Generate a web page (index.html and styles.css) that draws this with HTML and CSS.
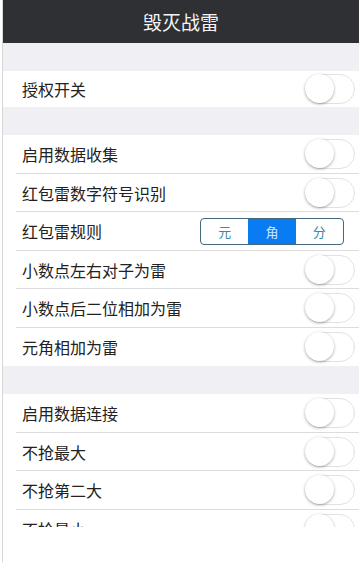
FILE: index.html
```html
<!DOCTYPE html>
<html lang="zh">

<head>
    <meta charset="UTF-8">
    <meta name="viewport" content="width=device-width, initial-scale=1.0">
    <title>毁灭战雷</title>
    <link rel="stylesheet" href="styles.css">
</head>

<body>
    <div class="page">
        <div class="navbar">
            <h2>毁灭战雷</h2>
        </div>
        <div id="content">
            <div class="gap"></div>
            <div class="group">
                <div class="row first"><span>授权开关</span><span class="switch"></span></div>
            </div>
            <div class="gap"></div>
            <div class="group">
                <div class="row"><span>启用数据收集</span><span class="switch"></span></div>
                <div class="row"><span>红包雷数字符号识别</span><span class="switch"></span></div>
                <div class="row">
                    <span>红包雷规则</span>
                    <div class="segment">
                        <button class="seg-btn">元</button>
                        <button class="seg-btn active">角</button>
                        <button class="seg-btn">分</button>
                    </div>
                </div>
                <div class="row"><span>小数点左右对子为雷</span><span class="switch"></span></div>
                <div class="row"><span>小数点后二位相加为雷</span><span class="switch"></span></div>
                <div class="row last"><span>元角相加为雷</span><span class="switch"></span></div>
            </div>
            <div class="gap"></div>
            <div class="group">
                <div class="row"><span>启用数据连接</span><span class="switch"></span></div>
                <div class="row"><span>不抢最大</span><span class="switch"></span></div>
                <div class="row"><span>不抢第二大</span><span class="switch"></span></div>
                <div class="row"><span>不抢最小</span><span class="switch"></span></div>
            </div>
        </div>
    </div>
</body>

</html>
```

FILE: styles.css
```css
html, body {
    margin: 0;
    height: 100%;
    background-color: #ffffff;
}

body {
    font-family: "Noto Sans CJK SC", "Noto Sans", sans-serif;
    color: #222222;
}

.page {
    margin-left: 2px;
    border-left: 1px solid #d6d6d6;
    height: 100%;
}

.navbar {
    height: 43px;
    background-color: #2f3034;
    display: flex;
    align-items: center;
    justify-content: center;
}

.navbar h2 {
    margin: 0;
    font-size: 19px;
    font-weight: normal;
    color: #f4f4f4;
}

#content {
    height: 484px;
    overflow: hidden;
    background-color: #efeff4;
}

.gap {
    height: 28px;
}

.group {
    background-color: #ffffff;
}

.row {
    position: relative;
    height: 38.5px;
    display: flex;
    align-items: center;
    justify-content: space-between;
    padding: 0 4px 0 19px;
    font-size: 16px;
    box-sizing: border-box;
}

.row.first {
    height: 36px;
}

.row::after {
    content: "";
    position: absolute;
    left: 13px;
    right: 0;
    bottom: 0;
    height: 1px;
    background-color: #dcdcdc;
}

.row.first::after,
.row.last::after {
    display: none;
}

.switch {
    position: relative;
    width: 50px;
    height: 30px;
    border-radius: 15px;
    border: 1.5px solid #e2e2e2;
    box-sizing: border-box;
    background-color: #ffffff;
}

.switch::before {
    content: "";
    position: absolute;
    left: -1px;
    top: -1px;
    width: 29px;
    height: 29px;
    border-radius: 50%;
    background-color: #ffffff;
    box-shadow: 0 1px 3px rgba(0, 0, 0, 0.35);
}

.segment {
    display: flex;
    width: 144px;
    height: 27px;
    border: 1px solid #45697a;
    border-radius: 4px;
    overflow: hidden;
    margin-right: 11px;
    box-sizing: border-box;
}

.seg-btn {
    flex: 1;
    border: none;
    background-color: transparent;
    color: #3b8aa3;
    font-family: inherit;
    font-size: 13px;
    padding: 0;
}

.seg-btn.active {
    background-color: #0a7cf3;
    color: #cfe6ff;
}
```
